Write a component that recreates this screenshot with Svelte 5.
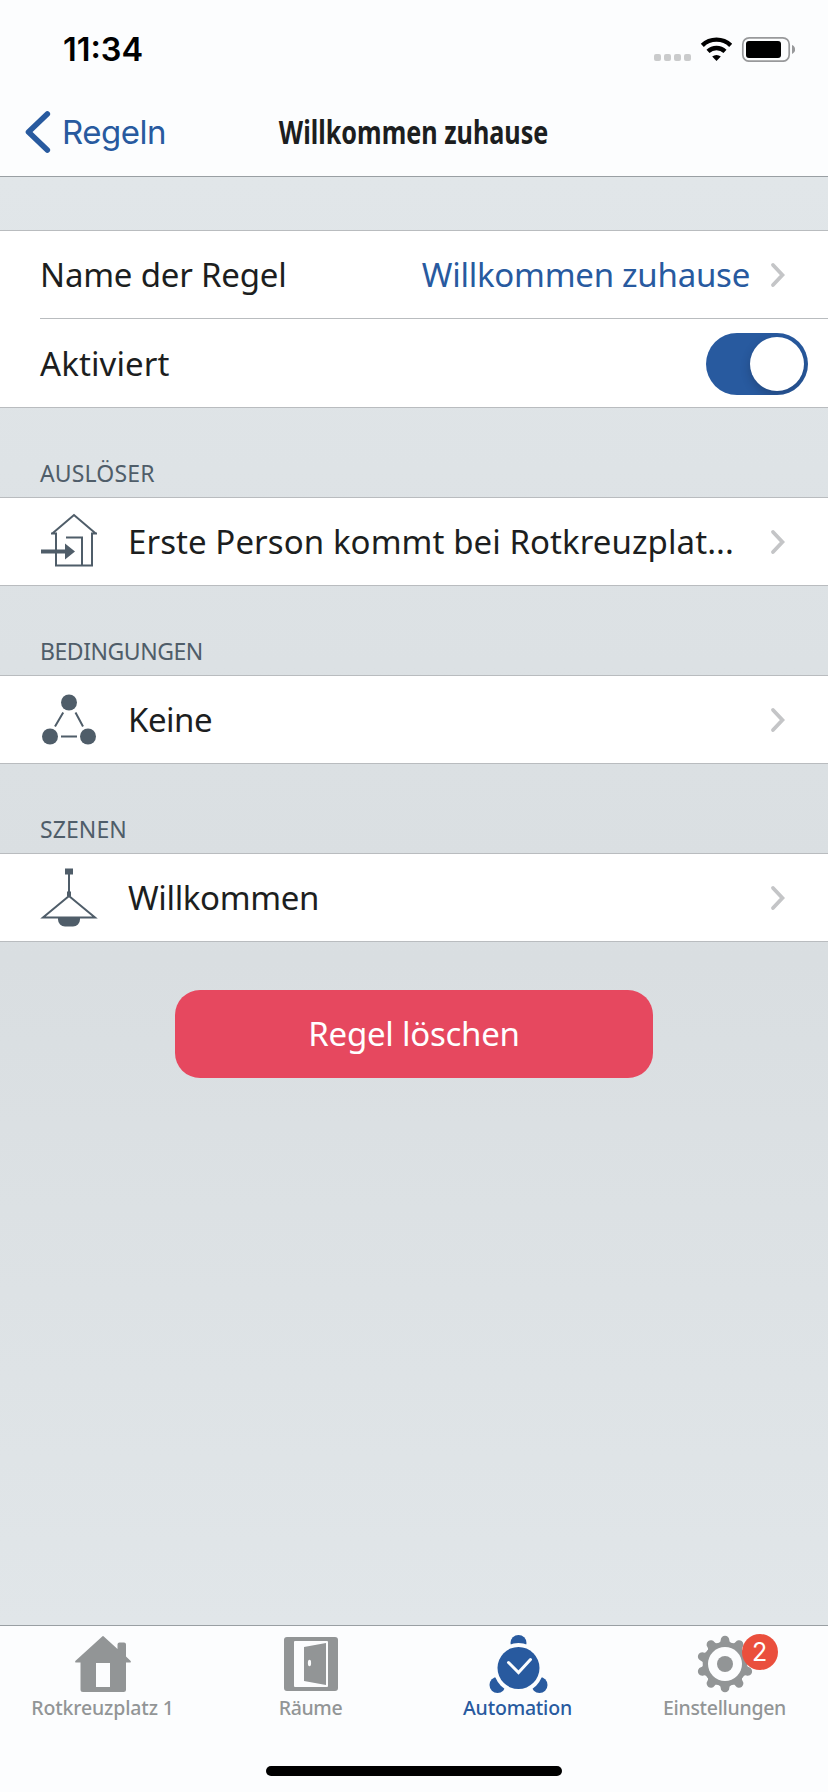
<script>
  const tabs = [
    { id: 'home', label: 'Rotkreuzplatz 1', ls: -0.15 },
    { id: 'rooms', label: 'Räume', ls: -0.4 },
    { id: 'automation', label: 'Automation', active: true, ls: -0.2 },
    { id: 'settings', label: 'Einstellungen', badge: 2, ls: -0.3 }
  ];
  const sections = [
    { title: 'AUSLÖSER', icon: 'arrive', text: 'Erste Person kommt bei Rotkreuzplat...', ls: 0.08, titleLs: 0.15 },
    { title: 'BEDINGUNGEN', icon: 'nodes', text: 'Keine', ls: -0.5, titleLs: -0.45 },
    { title: 'SZENEN', icon: 'lamp', text: 'Willkommen', ls: -0.35, titleLs: 0.1 }
  ];
  const teeth = Array.from({ length: 10 }, (_, i) => i * 36);
  let enabled = $state(true);
</script>

{#snippet chevron()}
  <svg class="chevron" width="16" height="26" viewBox="0 0 16 26" fill="none" stroke="#c4c5c7" stroke-width="3.8" stroke-linecap="round" stroke-linejoin="miter"><path d="M3 3 12.4 13 3 23" /></svg>
{/snippet}

<div class="screen">
  <header>
    <div class="status">
      <span class="time">11:34</span>
      <svg width="142" height="26" viewBox="0 0 142 26">
        <g fill="#cacbcc">
          <rect x="1" y="18" width="7" height="7" rx="2" /><rect x="11" y="18" width="7" height="7" rx="2" /><rect x="21" y="18" width="7" height="7" rx="2" /><rect x="31" y="18" width="7" height="7" rx="2" />
        </g>
        <g fill="none" stroke="#000" stroke-width="4.4">
          <path d="M49.3 9.3a20.6 20.6 0 0 1 28.4 0" />
          <path d="M55 15.4a12.4 12.4 0 0 1 17 0" />
        </g>
        <path d="M63.5 25 59.2 20.6a6.3 6.3 0 0 1 8.6 0Z" />
        <rect x="89.8" y="1.8" width="46.4" height="23.4" rx="6.4" fill="none" stroke="#98999b" stroke-width="1.7" />
        <rect x="93" y="5" width="35" height="17" rx="3" />
        <path d="M139 9v9c2-.8 3.2-2.5 3.2-4.5S141 9.800 139 9Z" fill="#98999b" />
      </svg>
    </div>
    <nav class="navbar">
      <div class="back">
        <svg width="28" height="46" viewBox="0 0 28 46" fill="none" stroke="#285a9f" stroke-width="5.6" stroke-linecap="round"><path d="M24.300 5 5.500 23 24.300 41" stroke-linejoin="round" /></svg>
        <span>Regeln</span>
      </div>
      <h1>Willkommen zuhause</h1>
      <div></div>
    </nav>
  </header>

  <main>
    <div class="card first">
      <div class="row">
        <span class="label" style:letter-spacing="-0.2px">Name der Regel</span>
        <span class="value">Willkommen zuhause</span>
        {@render chevron()}
      </div>
      <div class="line"></div>
      <div class="row toggle-row">
        <span class="label" style:letter-spacing="0.1px">Aktiviert</span>
        <button class="switch" class:on={enabled} aria-label="Aktiviert" onclick={() => (enabled = !enabled)}><i></i></button>
      </div>
    </div>

    {#each sections as s}
      <h2 style:letter-spacing="{s.titleLs}px">{s.title}</h2>
      <div class="card">
        <div class="row">
          <svg class="icon" width="58" height="64" viewBox="40 0 58 64" fill="#4f5d69">
            {#if s.icon === 'arrive'}
              <g fill="none" stroke="#4f5d69" stroke-width="2">
                <path d="M51 23.500H56V55.500H92V23.500H97M52.300 23.500 74 5 95.700 23.500" />
                <path d="M66 27.500H82V55" />
              </g>
              <path d="M41 39.500H65V33.500L75 41.500 65 49.500V43.500H41Z" />
            {:else if s.icon === 'nodes'}
              <circle cx="69" cy="14.500" r="8" /><circle cx="50" cy="48.500" r="8" /><circle cx="88" cy="48.500" r="8" />
              <path d="M63.200 24.500 55 38.500M75.500 24.500 83 38.500M61 48.500H77" stroke="#4f5d69" stroke-width="2" />
            {:else}
              <path d="M65 2.500h8v6h-3v17h1v5h-4v-5h1v-17h-3Z" />
              <path d="M69 30 43 51.500H95Z" fill="none" stroke="#4f5d69" stroke-width="2" />
              <path d="M58 52H80V53.500a7 7 0 0 1-7 7H65a7 7 0 0 1-7-7Z" />
            {/if}
          </svg>
          <span class="label" style:letter-spacing="{s.ls}px">{s.text}</span>
          {@render chevron()}
        </div>
      </div>
    {/each}

    <button class="delete">Regel löschen</button>
  </main>

  <footer>
    <div class="tabs">
      {#each tabs as t}
        <div class="tab" class:active={t.active} class:home={t.id === 'home'}>
          <div class="tab-icon">
            <svg width="60" height="60" viewBox="0 0 60 60" fill="currentColor">
              {#if t.id === 'home'}
                <path fill-rule="evenodd" d="M29.500 2.300q.5-.5 1 0L44.500 15V10.500q0-2 2-2h4.500q2 0 2 2V22.500L57.700 27q.8 1.500-.7 1.500H53V55.500q0 2.500-2.500 2.500H10q-2.500 0-2.500-2.500V28.500H3q-1.500 0-.7-1.500ZM23 29V53H37V29Z" />
              {:else if t.id === 'rooms'}
                <path fill-rule="evenodd" d="M6 3H54q3 0 3 3V54q0 3-3 3H6q-3 0-3-3V6q0-3 3-3ZM14 7q-1 0-1 1V52q0 1 1 1H46q1 0 1-1V8q0-1-1-1Z" />
                <path d="M23 13 45 9V51L23 47Z" /><ellipse cx="28.500" cy="29" rx="1.600" ry="3.200" fill="#fcfdfe" />
              {:else if t.id === 'automation'}
                <circle cx="30.500" cy="9" r="8" /><circle cx="9.500" cy="51" r="8" /><circle cx="51.500" cy="51" r="8" />
                <circle cx="30.500" cy="34" r="25" fill="#fcfdfe" /><circle cx="30.500" cy="34" r="21" />
                <path d="M20.500 28.500 30.500 38.500 42.500 25.500" fill="none" stroke="#fcfdfe" stroke-width="3" stroke-linecap="round" />
              {:else}
                <circle cx="30" cy="30" r="22.300" />
                {#each teeth as a}
                  <path d="M22 9.500Q25.700 9 25.700 6a4.300 4.300 0 0 1 8.600 0Q34.300 9 38 9.500Z" transform="rotate({a} 30 30)" />
                {/each}
                <circle cx="30" cy="30" r="17" fill="#fcfdfe" /><circle cx="30" cy="30" r="8" />
              {/if}
            </svg>
            {#if t.badge}<b class="badge">{t.badge}</b>{/if}
          </div>
          <span class="tab-label" style:letter-spacing="{t.ls}px">{t.label}</span>
        </div>
      {/each}
    </div>
    <div class="home-bar"></div>
  </footer>
</div>

<style>
  :global(body) { margin: 0; }
  .screen {
    width: 828px; height: 1792px; display: flex; flex-direction: column; overflow: hidden;
    font-family: "Noto Sans", "Open Sans", sans-serif; color: #1c1e20;
    background: #e1e6e9;
  }
  header { height: 176px; background: #fcfdfe; border-bottom: 1px solid #999fa3; flex: none; }
  .status { height: 88px; display: flex; justify-content: space-between; padding: 0 33px 0 63px; }
  .status svg { margin-top: 36px; }
  .time { font: 600 32.500px/40px Inter, sans-serif; margin-top: 30px; color: #000; }
  .navbar { height: 88px; display: grid; grid-template-columns: 1fr auto 1fr; align-items: center; }
  .back { display: flex; align-items: center; color: #285a9f; padding-left: 23px; gap: 11px; font: 400 33px/44px Inter, sans-serif; letter-spacing: -.5px; }
  h1 { margin: 0; font-size: 33px; line-height: 44px; font-weight: 700; white-space: nowrap; transform: scaleX(.763); }
  main { flex: 1; display: flex; flex-direction: column; background: linear-gradient(#e1e6e9, #d9dee1 54%, #e1e6e9); }
  .card { background: #fff; border: solid #b9bcbf; border-width: 1px 0; flex: none; }
  .first { margin-top: 53px; }
  .row { height: 87px; display: flex; align-items: center; padding: 0 42px 0 40px; }
  .toggle-row { height: 86px; padding-top: 2px; padding-right: 20px; }
  .line { height: 1px; background: #b9bcbf; margin-left: 40px; }
  .label, .value { font-size: 33px; line-height: 44px; white-space: nowrap; }
  .label { flex: 1; }
  .value { color: #285a9f; letter-spacing: -.25px; }
  .chevron { margin: 0 0 0 20px; flex: none; }
  .icon { margin-right: 30px; flex: none; }
  .switch { width: 102px; height: 62px; border: 0; border-radius: 31px; padding: 4px; background: #ccd0d3; display: flex; overflow: hidden; }
  .switch.on { background: #285a9f; justify-content: flex-end; }
  .switch i { width: 54px; height: 54px; border-radius: 50%; background: #fff; box-shadow: 0 4px 10px rgba(20, 30, 50, .28); }
  h2 { margin: 0; height: 89px; box-sizing: border-box; padding: 47px 0 0 40px; font-size: 23px; line-height: 36px; font-weight: 400; color: #4f5d69; }
  .delete { align-self: center; width: 478px; height: 88px; margin-top: 48px; border: 0; border-radius: 25px; background: #e6485f; color: #fff; font: 400 33px/44px "Noto Sans", sans-serif; letter-spacing: -.25px; padding: 0; }
  footer { height: 166px; background: #fcfdfe; border-top: 1px solid #999fa3; flex: none; }
  .tabs { display: grid; grid-template-columns: repeat(4, 1fr); height: 140px; }
  .tab { display: flex; flex-direction: column; align-items: center; color: #929596; padding-top: 8px; }
  .tab.active { color: #285a9f; }
  .tab.home { padding-right: 2px; }
  .tab-icon { position: relative; height: 60px; }
  .badge { position: absolute; left: 47px; top: 0; width: 36px; height: 36px; border-radius: 50%; background: #ea4f3d; color: #fff; font: 400 25px/36px Inter, sans-serif; text-align: center; }
  .tab-label { font-size: 19.500px; line-height: 28px; font-weight: 500; }
  .home-bar { width: 296px; height: 10px; border-radius: 5px; background: #000; margin: 0 auto; }
</style>
